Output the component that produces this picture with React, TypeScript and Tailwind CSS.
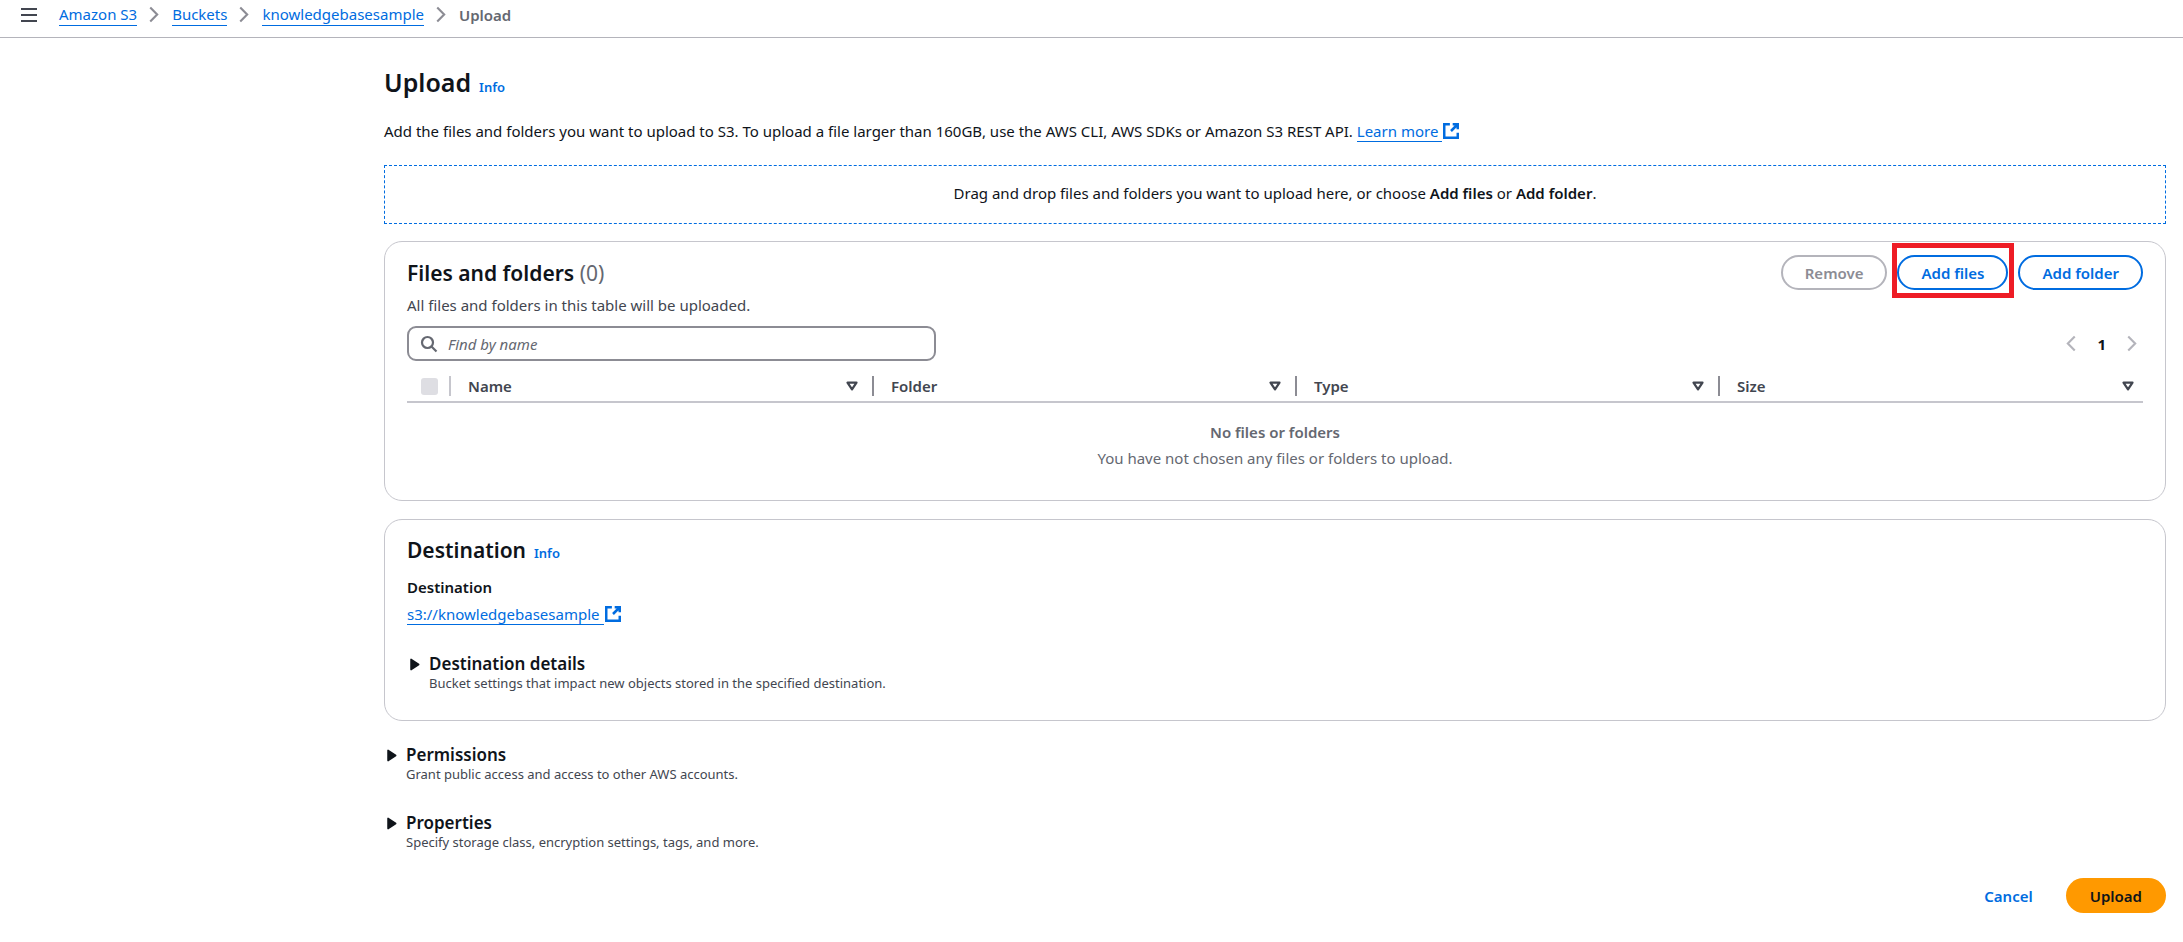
import type { ReactNode } from "react";

const LINK = "border-b border-[#006ce0] text-[#006ce0]";

function Chevron({ direction = "right", className = "" }: { direction?: "left" | "right"; className?: string }) {
  return (
    <svg viewBox="0 0 16 16" className={`size-[17px] shrink-0 ${className}`} fill="none" stroke="currentColor" strokeWidth="2" aria-hidden="true">
      <path d={direction === "right" ? "m4 1.5 6.5 6.5L4 14.5" : "M12 1.5 5.5 8l6.5 6.5"} />
    </svg>
  );
}

function ExternalLink({ href, children }: { href: string; children: ReactNode }) {
  return (
    <a href={href} className="text-[#006ce0]">
      <span className={`${LINK} pr-1`}>{children}</span>
      <svg viewBox="0 0 16 16" className="-mt-1 inline size-[18px] align-middle" fill="none" stroke="currentColor" strokeWidth="2.2" aria-hidden="true">
        <path d="M9.5 2H14v4.5M14 2 8 8M14 9.5V14H2V2h5" />
      </svg>
    </a>
  );
}

function InfoLink() {
  return (
    <a href="#info" className="text-[13px] leading-[18px] font-semibold text-[#006ce0]">
      Info
    </a>
  );
}

function SortIcon() {
  return (
    <svg viewBox="0 0 16 16" className="size-[18px] shrink-0" fill="none" stroke="currentColor" strokeWidth="2" strokeLinejoin="round" aria-hidden="true">
      <path d="M4 5h8l-4 6z" />
    </svg>
  );
}

function PillButton({ children, disabled = false }: { children: ReactNode; disabled?: boolean }) {
  return (
    <button
      type="button"
      disabled={disabled}
      className="h-[35px] rounded-full border-2 border-[#006ce0] px-[22px] font-semibold text-[#006ce0] disabled:border-[#b4b4bb] disabled:text-[#8c8c94]"
    >
      {children}
    </button>
  );
}

function Expandable({ title, description }: { title: string; description: string }) {
  return (
    <details>
      <summary className="flex cursor-pointer list-none gap-[5px]">
        <svg viewBox="0 0 16 16" className="mt-[3px] size-[17px] shrink-0" fill="currentColor" stroke="currentColor" strokeWidth="1.5" strokeLinejoin="round" aria-hidden="true">
          <path d="M3.8 3.2v9.6L11 8z" />
        </svg>
        <div>
          <h3 className="text-[17px] leading-[22px] font-semibold">{title}</h3>
          <p className="text-[13px] leading-4 text-[#424650]">{description}</p>
        </div>
      </summary>
    </details>
  );
}

const COLUMNS = ["Name", "Folder", "Type", "Size"];

export default function App() {
  return (
    <div className="min-h-screen bg-white font-['Noto_Sans',sans-serif] text-[15px] leading-[22px] text-[#0f141a]">
      <header className="flex items-center border-b border-[#b4b4bb] pt-[3px] pb-[11px] pl-5">
        <button type="button" aria-label="Open navigation" className="mr-[21px] text-[#424650]">
          <svg viewBox="0 0 18 18" className="size-[18px]" stroke="currentColor" strokeWidth="2" aria-hidden="true">
            <path d="M1 3h16M1 9h16M1 15h16" />
          </svg>
        </button>
        <nav aria-label="Breadcrumbs">
          <ol className="flex items-center">
            <li className="flex items-center"><a href="#s3" className={LINK}>Amazon S3</a><Chevron className="mx-[9px] text-[#8c8c94]" /></li>
            <li className="flex items-center"><a href="#buckets" className={LINK}>Buckets</a><Chevron className="mx-[9px] text-[#8c8c94]" /></li>
            <li className="flex items-center"><a href="#bucket" className={LINK}>knowledgebasesample</a><Chevron className="mx-[9px] text-[#8c8c94]" /></li>
            <li className="font-semibold text-[#656871]">Upload</li>
          </ol>
        </nav>
      </header>

      <main className="pt-7 pr-[17px] pb-7 pl-96">
        <div className="flex items-baseline gap-2">
          <h1 className="text-[25px] leading-8 font-semibold">Upload</h1>
          <InfoLink />
        </div>
        <p className="mt-[22px]">
          Add the files and folders you want to upload to S3. To upload a file larger than 160GB, use the AWS CLI, AWS
          SDKs or Amazon S3 REST API. <ExternalLink href="#learn-more">Learn more</ExternalLink>
        </p>

        <div className="mt-[23px] border border-dashed border-[#006ce0] pt-4 pb-[19px] text-center">
          Drag and drop files and folders you want to upload here, or choose <b className="font-semibold">Add files</b>{" "}
          or <b className="font-semibold">Add folder</b>.
        </div>

        <section className="mt-[17px] rounded-[18px] border border-[#c6c6cd] px-[22px] pt-[13px] pb-[31px]">
          <div className="flex items-center justify-between">
            <h2 className="text-[21px] leading-7 font-semibold">
              Files and folders <span className="font-normal text-[#656871]">(0)</span>
            </h2>
            <div className="flex gap-[10px]">
              <PillButton disabled>Remove</PillButton>
              <div className="relative">
                <PillButton>Add files</PillButton>
                <div className="pointer-events-none absolute -top-3 -right-[6px] -bottom-2 -left-[5px] border-5 border-[#ee1c25]" />
              </div>
              <PillButton>Add folder</PillButton>
            </div>
          </div>
          <p className="mt-1 text-[#424650]">All files and folders in this table will be uploaded.</p>

          <div className="mt-[10px] flex items-center justify-between">
            <label className="flex h-[35px] w-[529px] items-center gap-[10px] rounded-[9px] border-2 border-[#8c8c94] px-[11px]">
              <svg viewBox="0 0 18 18" className="size-[18px] shrink-0 text-[#656871]" fill="none" stroke="currentColor" strokeWidth="2.2" aria-hidden="true">
                <circle cx="7.5" cy="7.5" r="5.5" />
                <path d="m11.5 11.5 5 5" />
              </svg>
              <input
                type="search"
                aria-label="Find by name"
                placeholder="Find by name"
                className="w-full outline-none placeholder:text-[#656871] placeholder:italic"
              />
            </label>
            <div className="flex items-center gap-[18px] pr-[2px]">
              <button type="button" disabled aria-label="Previous page" className="text-[#b4b4bb]">
                <Chevron direction="left" />
              </button>
              <span className="font-bold">1</span>
              <button type="button" disabled aria-label="Next page" className="text-[#b4b4bb]">
                <Chevron />
              </button>
            </div>
          </div>

          <table className="mt-[10px] w-full table-fixed border-collapse">
            <thead className="border-b-2 border-[#c6c6cd] text-[#424650]">
              <tr>
                <th className="w-11 p-0">
                  <div className="flex h-[30px] items-center justify-between pl-[14px]">
                    <input type="checkbox" disabled aria-label="Select all" className="size-[17px] appearance-none rounded-[3px] bg-[#dedee3]" />
                    <span className="h-5 w-[2px] bg-[#c6c6cd]" />
                  </div>
                </th>
                {COLUMNS.map((name, i) => (
                  <th key={name} className="p-0 font-semibold">
                    <div className="flex h-[30px] items-center pl-[17px]">
                      <span className="grow text-left">{name}</span>
                      <SortIcon />
                      {i < COLUMNS.length - 1 ? <span className="ml-[11px] h-5 w-[2px] bg-[#8c8c94]" /> : <span className="w-[6px]" />}
                    </div>
                  </th>
                ))}
              </tr>
            </thead>
            <tbody>
              <tr>
                <td colSpan={5} className="p-0 pt-[18px] text-center text-[#656871]">
                  <p className="font-semibold">No files or folders</p>
                  <p className="mt-1">You have not chosen any files or folders to upload.</p>
                </td>
              </tr>
            </tbody>
          </table>
        </section>

        <section className="mt-[18px] rounded-[18px] border border-[#c6c6cd] px-[22px] pt-4 pb-[29px]">
          <div className="flex items-baseline gap-2">
            <h2 className="text-[21px] leading-7 font-semibold">Destination</h2>
            <InfoLink />
          </div>
          <p className="mt-3 font-semibold">Destination</p>
          <p className="mt-[5px] mb-7">
            <ExternalLink href="#destination">s3://knowledgebasesample</ExternalLink>
          </p>
          <Expandable title="Destination details" description="Bucket settings that impact new objects stored in the specified destination." />
        </section>

        <div className="mt-[23px] flex flex-col gap-[30px]">
          <Expandable title="Permissions" description="Grant public access and access to other AWS accounts." />
          <Expandable title="Properties" description="Specify storage class, encryption settings, tags, and more." />
        </div>

        <div className="mt-7 flex justify-end gap-[9px]">
          <button type="button" className="h-[35px] px-6 font-semibold text-[#006ce0]">Cancel</button>
          <button type="button" className="h-[35px] rounded-full bg-[#ff9900] px-6 font-semibold">Upload</button>
        </div>
      </main>
    </div>
  );
}
